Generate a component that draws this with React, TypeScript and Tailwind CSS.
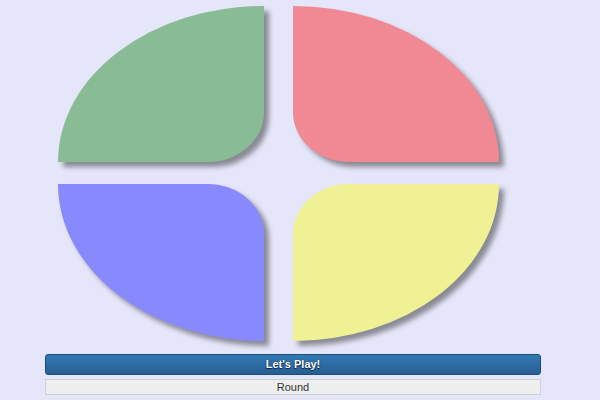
import React from "react";

export default function App() {
  const shadow = "shadow-[5px_5px_5px_rgba(0,0,0,0.4)]";
  return (
    <div
      className="w-[600px] h-[400px] bg-[#e6e6fa] overflow-hidden"
      style={{ fontFamily: '"Liberation Sans", Arial, sans-serif' }}
    >
      <div className="pt-[6px] pl-[58px]">
        <div className="grid grid-cols-[206px_206px] grid-rows-[156px_157px] gap-x-[29px] gap-y-[22px]">
          <div className={`bg-[#89bb95] rounded-tl-[100%_100%] rounded-br-[56px_50px] ${shadow}`} />
          <div className={`bg-[#f08993] rounded-tr-[100%_100%] rounded-bl-[56px_50px] ${shadow}`} />
          <div className={`bg-[#8889fd] rounded-bl-[100%_100%] rounded-tr-[56px_50px] ${shadow}`} />
          <div className={`bg-[#f0f095] rounded-br-[100%_100%] rounded-tl-[56px_50px] ${shadow}`} />
        </div>
      </div>
      <div className="ml-[45px] w-[496px] mt-[13px] flex flex-col gap-[4px]">
        <button className="h-[21px] w-full rounded-[3px] border border-[#1f4b78] bg-gradient-to-b from-[#3379b6] to-[#285e92] text-white text-[11px] font-bold leading-none [text-shadow:0_0_1px_#0b2540,0_1px_1px_#0b2540]">
          Let's Play!
        </button>
        <div className="h-[16px] w-full border border-[#cfcfd6] bg-[#eeeeee] text-[#333] text-[11px] leading-[14px] text-center">
          Round
        </div>
      </div>
    </div>
  );
}
